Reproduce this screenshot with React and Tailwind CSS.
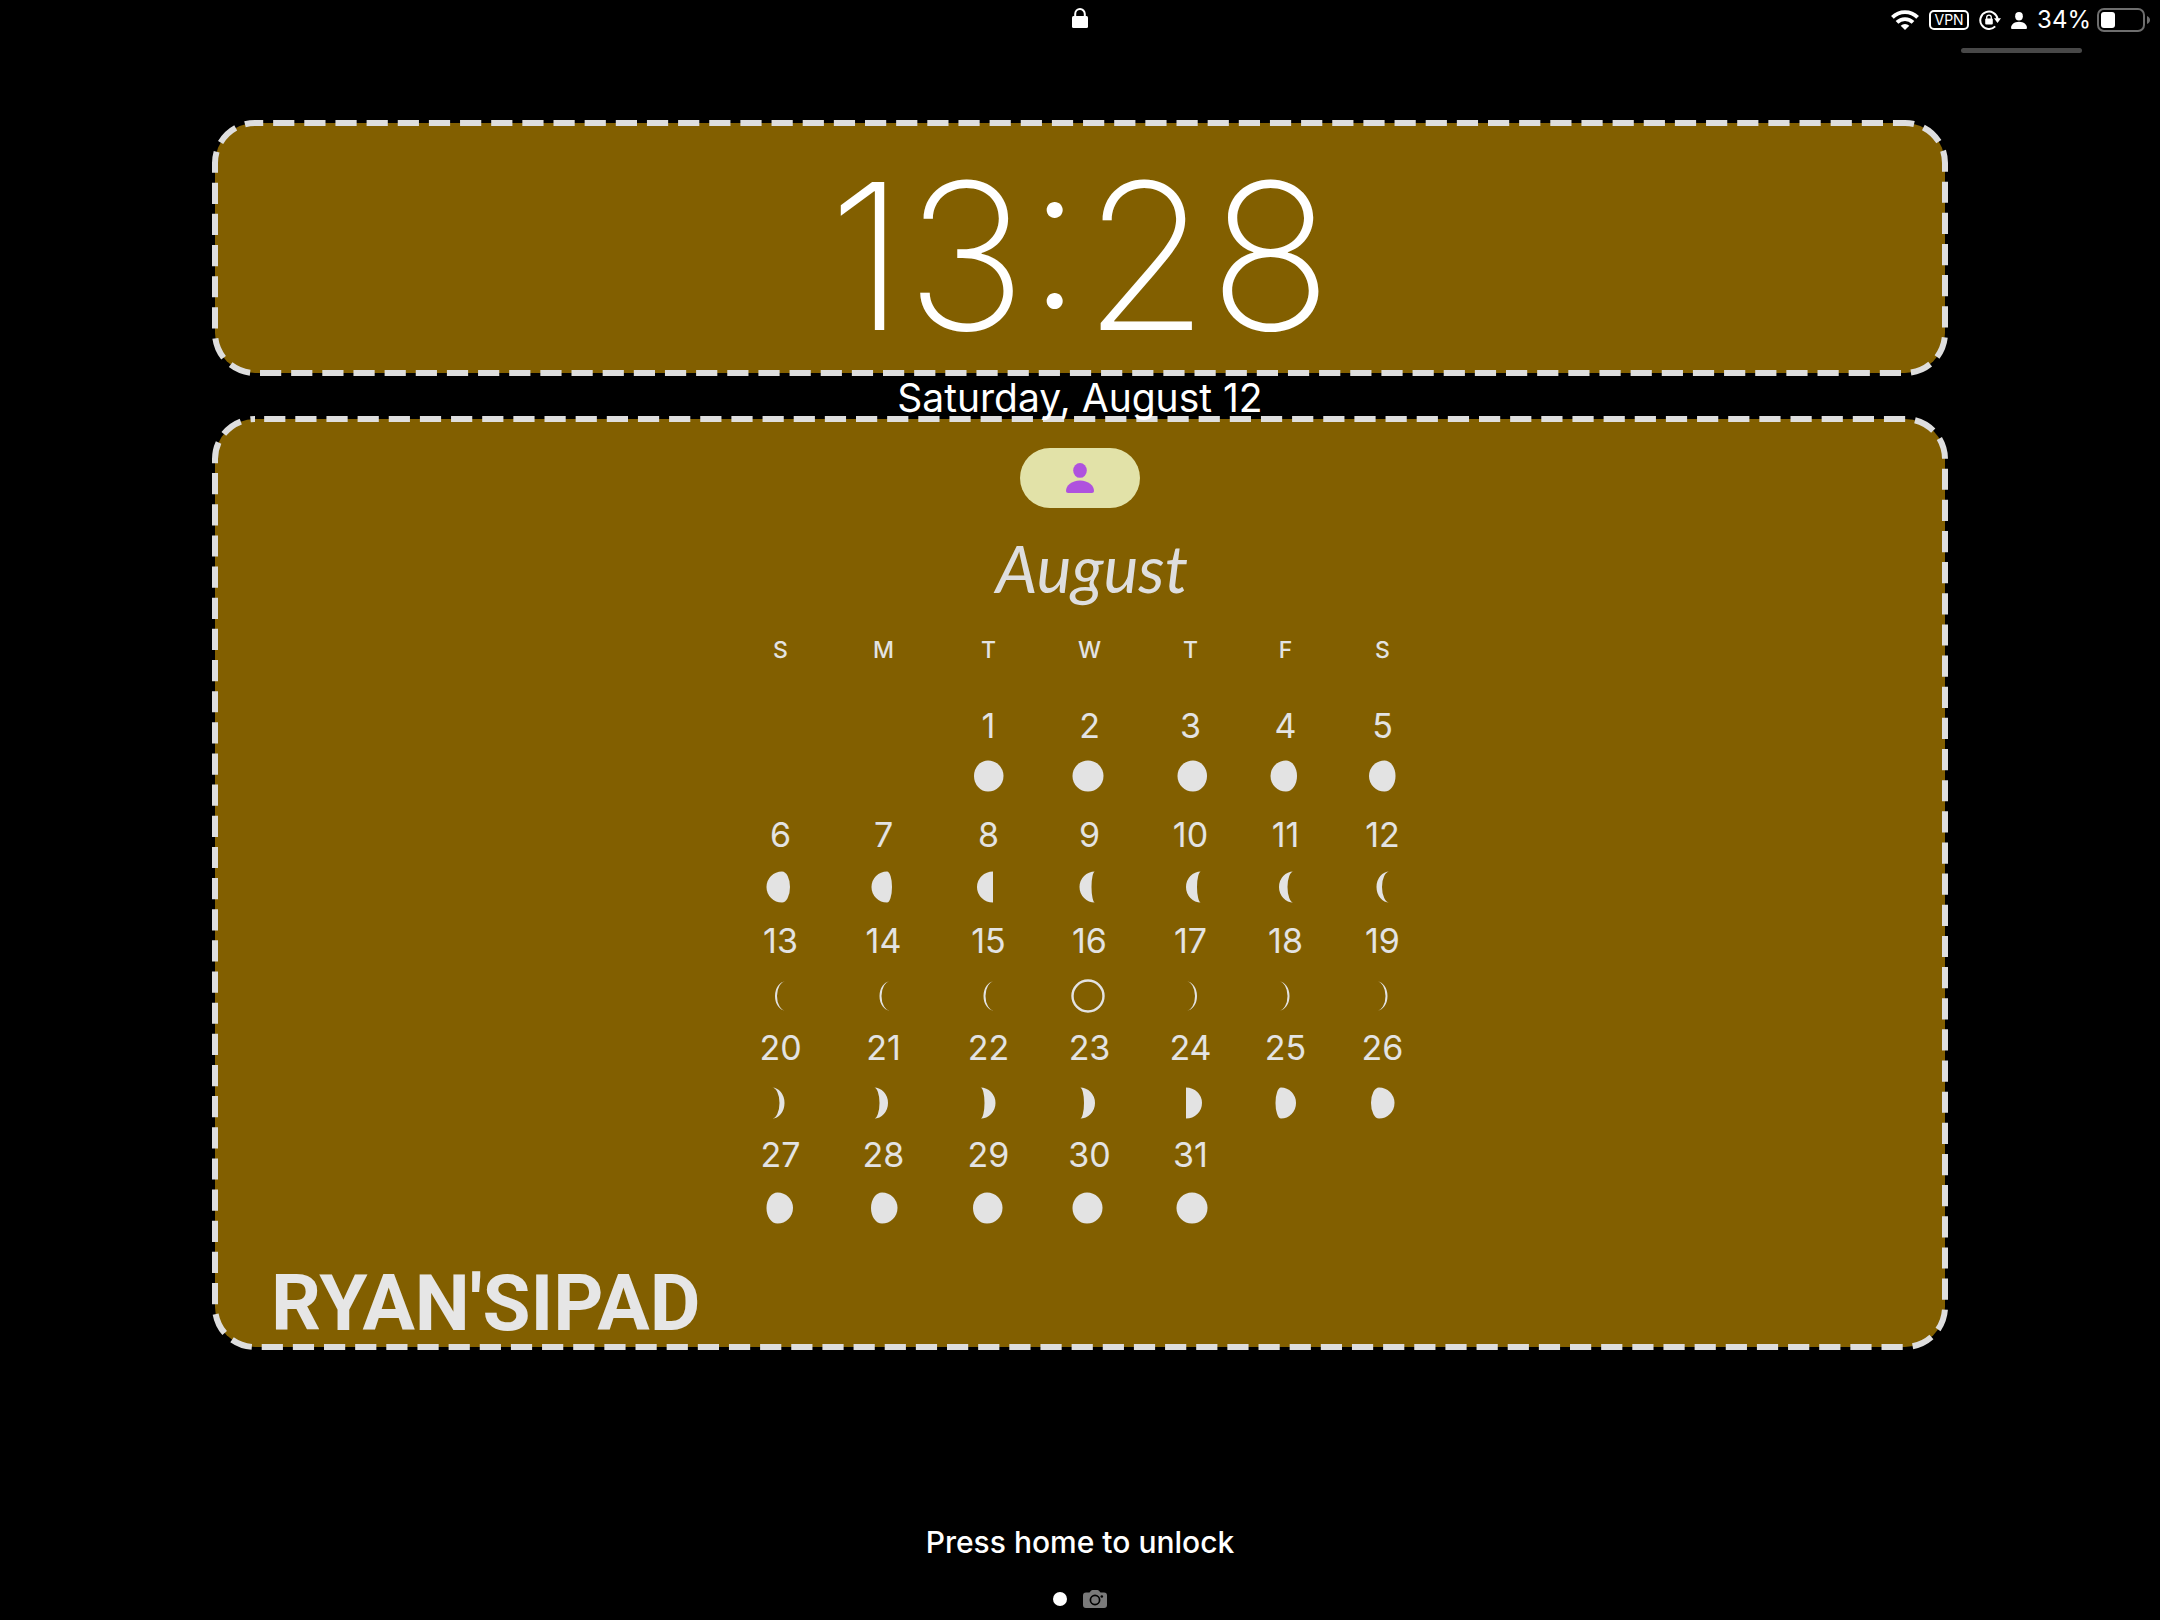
import React from "react";

const WEEKDAYS = ["S", "M", "T", "W", "T", "F", "S"];

const COLUMNS = [
  "w-[100px]",
  "w-[106px]",
  "w-[104px]",
  "w-[98px]",
  "w-[104px]",
  "w-[86px]",
  "w-[108px]",
];

// Each moon is [x of the terminator's poles, left bulge, right bulge];
// a negative bulge curves inward and makes a crescent.
const WEEKS = [
  {
    spacing: "gap-3 pb-[21px]",
    days: [
      null,
      null,
      [1, [-1, 14, 15.5]],
      [2, [-2, 15.5, 15.5]],
      [3, [2, 15.5, 14]],
      [4, [0, 15.5, 11]],
      [5, [1.5, 15.5, 11]],
    ],
  },
  {
    spacing: "gap-[14px] pb-4",
    days: [
      [6, [1, 15.5, 8]],
      [7, [3, 15.5, 5]],
      [8, [4, 16, 0]],
      [9, [5, 15.5, -3.5]],
      [10, [10, 15, -4]],
      [11, [7.5, 14.5, -6]],
      [12, [6.5, 13, -7.5]],
    ],
  },
  {
    spacing: "gap-[17px] pb-[14px]",
    days: [
      [13, [4.5, 10.5, -8.5]],
      [14, [6, 10.5, -8.5]],
      [15, [5, 10.5, -8.5]],
      [16, "new"],
      [17, [-4.5, -8.5, 10.5]],
      [18, [-7, -8.5, 10.5]],
      [19, [-6, -8.5, 10.5]],
    ],
  },
  {
    spacing: "gap-[17px] pb-[14px]",
    days: [
      [20, [-9, -7.5, 12.5]],
      [21, [-10, -5.5, 14]],
      [22, [-8.5, -4, 15]],
      [23, [-10, -4, 15]],
      [24, [-5, 0, 16]],
      [25, [-5, 5.5, 15]],
      [26, [-4, 8, 15.5]],
    ],
  },
  {
    spacing: "gap-[15px] pb-0",
    days: [
      [27, [-3.5, 11, 15.5]],
      [28, [-2, 11, 15.5]],
      [29, [-2, 14, 15.5]],
      [30, [-3, 14.5, 15.5]],
      [31, [1, 15.5, 15.5]],
      null,
      null,
    ],
  },
];

function Moon({ phase }) {
  if (phase === "new") {
    return (
      <svg viewBox="-20 -16 40 32" className="h-8 w-10 overflow-visible" aria-hidden="true">
        <circle cx="-2" cy="0" r="15.5" fill="none" stroke="#e3e3e3" strokeWidth="2.4" />
      </svg>
    );
  }
  const [x, left, right] = phase;
  const thin = Math.min(left, right) < -8;
  const r = thin ? 14.5 : 15.5;
  const d = [
    `M${x} ${-r}`,
    right === 0 ? `L${x} ${r}` : `A${Math.abs(right)} ${r} 0 0 ${right > 0 ? 1 : 0} ${x} ${r}`,
    left === 0 ? `L${x} ${-r}` : `A${Math.abs(left)} ${r} 0 0 ${left > 0 ? 1 : 0} ${x} ${-r}`,
    "Z",
  ].join(" ");
  return (
    <svg viewBox="-20 -16 40 32" className="h-8 w-10 overflow-visible" aria-hidden="true">
      <path d={d} fill="#e3e3e3" />
    </svg>
  );
}

function DashedFrame({ offset }) {
  return (
    <svg className="pointer-events-none absolute inset-0 h-full w-full overflow-visible" aria-hidden="true">
      <rect
        width="100%"
        height="100%"
        rx="40"
        fill="none"
        stroke="#dedede"
        strokeWidth="6"
        strokeDasharray="21.2 9.95"
        strokeDashoffset={offset}
      />
    </svg>
  );
}

function PersonIcon({ className }) {
  return (
    <svg viewBox="0 0 28 30" className={className} fill="currentColor" aria-hidden="true">
      <ellipse cx="14" cy="7.4" rx="6.8" ry="7.4" />
      <path d="M2.2 30C.8 30 0 29.2 0 27.8 0 22.6 5.6 17.4 14 17.4S28 22.6 28 27.8C28 29.2 27.2 30 25.8 30Z" />
    </svg>
  );
}

function LockIcon() {
  return (
    <svg viewBox="0 0 16 20" className="h-5 w-4" aria-hidden="true">
      <path d="M3.2 9V6a4.8 5 0 0 1 9.6 0v3" fill="none" stroke="#fff" strokeWidth="2" />
      <rect y="8" width="16" height="12" rx="1.5" fill="#fff" />
    </svg>
  );
}

function WifiIcon() {
  return (
    <svg viewBox="0 0 28 20" className="h-5 w-7" aria-hidden="true">
      <g fill="none" stroke="#fff" strokeWidth="3.8">
        <path d="M1.4 7.4a17.8 17.8 0 0 1 25.2 0" />
        <path d="M6 12.4a11.3 11.3 0 0 1 16 0" />
      </g>
      <path d="M14 20l-4.3-4.3a6 6 0 0 1 8.6 0z" fill="#fff" />
    </svg>
  );
}

function RotationLockIcon() {
  return (
    <svg viewBox="0 0 22 20" className="h-5 w-[22px]" aria-hidden="true">
      <path d="M16.2 16.4A8.7 8.7 0 1 1 18.6 9" fill="none" stroke="#fff" strokeWidth="2" />
      <path d="M15 8.3h7l-3.5 4.6z" fill="#fff" />
      <rect x="6.2" y="8.6" width="7.6" height="6" rx="1" fill="#fff" />
      <path d="M7.7 9V7.4a2.3 2.3 0 0 1 4.6 0V9" fill="none" stroke="#fff" strokeWidth="1.3" />
    </svg>
  );
}

function BatteryIcon() {
  return (
    <svg viewBox="0 0 53 24" className="h-6 w-[53px]" aria-hidden="true">
      <rect x="1" y="1" width="46" height="22" rx="6" fill="none" stroke="#6e6e6e" strokeWidth="2" />
      <rect x="4" y="4" width="14" height="16" rx="3" fill="#fff" />
      <path d="M50 8c4 1.5 4 6.5 0 8z" fill="#6e6e6e" />
    </svg>
  );
}

function CameraIcon() {
  return (
    <svg viewBox="0 0 24 18" className="h-[18px] w-6" aria-hidden="true">
      <path
        d="M3 2.5h3.5L8 .8C8.5.2 9 0 9.6 0h4.8c.6 0 1.1.2 1.6.8l1.5 1.7H21a3 3 0 0 1 3 3V15a3 3 0 0 1-3 3H3a3 3 0 0 1-3-3V5.5a3 3 0 0 1 3-3Z"
        fill="#7a7a7a"
      />
      <circle cx="12" cy="10" r="4.6" fill="none" stroke="#000" strokeWidth="1.7" />
      <circle cx="18.8" cy="6.5" r="1.3" fill="#000" />
    </svg>
  );
}

export default function App() {
  return (
    <div className="flex min-h-screen flex-col bg-black font-['Inter',sans-serif] text-white">
      <header className="grid h-[60px] grid-cols-[1fr_auto_1fr] items-start">
        <span />
        <span className="pt-2">
          <LockIcon />
        </span>
        <div className="flex flex-col items-end">
          <div className="flex h-10 items-center gap-[6px] pr-[10px]">
            <WifiIcon />
            <span className="mx-1 flex h-5 w-10 items-center justify-center rounded-[5px] border-2 border-white text-[14px] leading-4">
              VPN
            </span>
            <RotationLockIcon />
            <span className="flex w-6 justify-center">
              <PersonIcon className="h-[17px] w-4" />
            </span>
            <span className="text-[24px] leading-6">34%</span>
            <BatteryIcon />
          </div>
          <div className="mt-2 mr-[78px] h-[5px] w-[121px] rounded-full bg-[#484848]" />
        </div>
      </header>

      <main className="flex flex-1 flex-col px-[215px] pt-[63px]">
        <section className="relative flex h-[250px] items-center justify-center rounded-[40px] bg-[#825f00] pt-4">
          <DashedFrame offset={13} />
          <time className="relative text-[204px] leading-[204px] font-extralight">13:28</time>
        </section>

        <p className="relative z-10 -mb-1 text-center text-[39px] leading-[50px]">Saturday, August 12</p>

        <section className="relative flex flex-col items-center rounded-[40px] bg-[#825f00] pt-[29px]">
          <DashedFrame offset={22} />
          <button
            type="button"
            aria-label="Focus"
            className="relative flex h-[60px] w-[120px] items-center justify-center rounded-full bg-[#e2e2a8] text-[#af52de]"
          >
            <PersonIcon className="h-[30px] w-7" />
          </button>

          <h1 className="mt-6 pl-6 font-['Lato',cursive] text-[66px] leading-[72px] font-normal text-[#dedede] italic">
            August
          </h1>

          <div className="mt-[34px] pl-[7px]">
            <table className="table-fixed border-collapse text-center text-[#e3e3e3]">
              <colgroup>
                {COLUMNS.map((width, i) => (
                  <col key={i} className={width} />
                ))}
              </colgroup>
              <thead>
                <tr>
                  {WEEKDAYS.map((day, i) => (
                    <th key={i} scope="col" className="p-0 pb-[42px] text-[23px] leading-6 font-medium">
                      {day}
                    </th>
                  ))}
                </tr>
              </thead>
              <tbody>
                {WEEKS.map(({ spacing, days }, w) => (
                  <tr key={w}>
                    {days.map((day, i) => (
                      <td key={i} className="p-0">
                        {day && (
                          <div className={`flex flex-col items-center ${spacing}`}>
                            <span className="text-[34px] leading-[44px] font-normal">{day[0]}</span>
                            <Moon phase={day[1]} />
                          </div>
                        )}
                      </td>
                    ))}
                  </tr>
                ))}
              </tbody>
            </table>
          </div>

          <p className="mt-10 self-start pb-[3px] pl-14 font-['Roboto',sans-serif] text-[78px] leading-[80px] font-bold text-[#e6e6e6]">
            RYAN'SIPAD
          </p>
        </section>
      </main>

      <footer className="flex flex-col items-center pb-3">
        <p className="text-[30px] leading-10 font-medium">Press home to unlock</p>
        <div className="mt-7 flex items-center gap-4">
          <span className="h-[14px] w-[14px] rounded-full bg-white" />
          <CameraIcon />
        </div>
      </footer>
    </div>
  );
}
